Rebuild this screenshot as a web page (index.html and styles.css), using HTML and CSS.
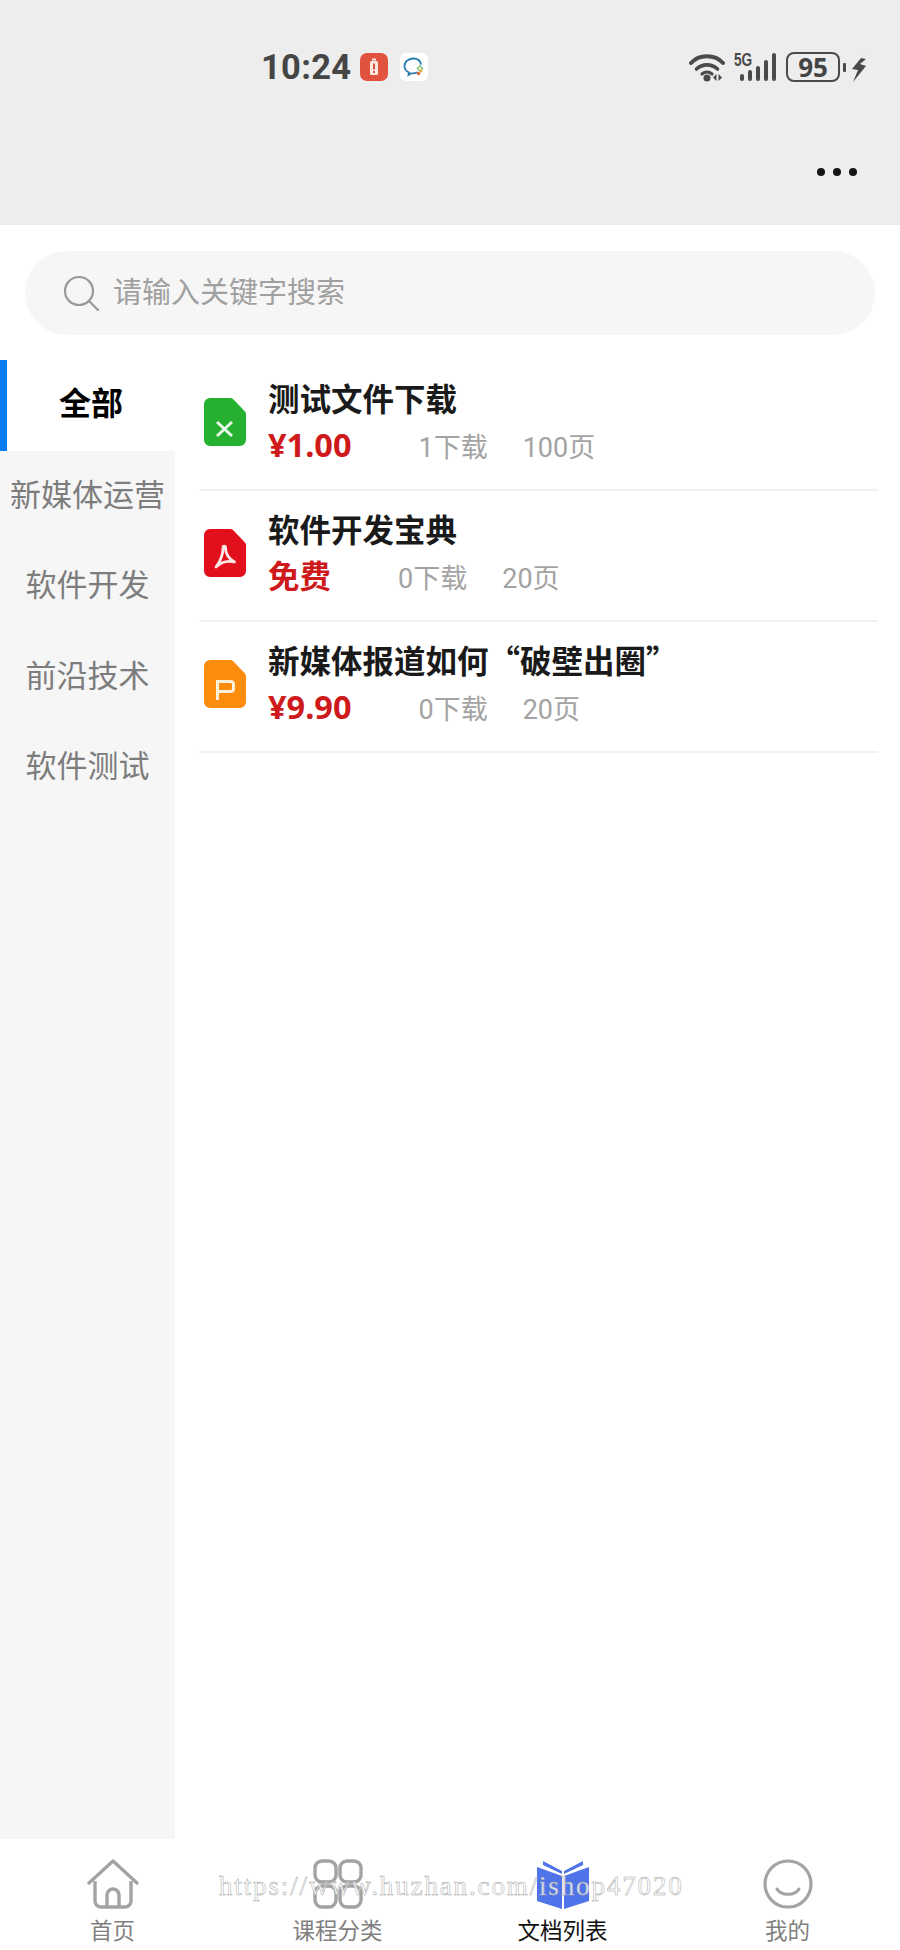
FILE: index.html
```html
<!DOCTYPE html>
<html lang="zh-CN">
<head>
  <meta charset="UTF-8">
  <title>文档列表</title>
  <link rel="stylesheet" href="styles.css">
</head>
<body>

  <div class="page">
    <header class="top">
      <div class="status">
        <span class="time">10:24</span>
        <svg class="badge-red" viewBox="0 0 28 28">
          <rect width="28" height="28" rx="7" fill="#e2533f"/>
          <rect x="10" y="8" width="8" height="14" rx="1.500" fill="#fbe9e4"/>
          <rect x="12" y="5.500" width="4" height="2" fill="#fbe9e4"/>
          <rect x="13" y="10.500" width="2" height="6" fill="#e2533f"/>
          <rect x="13" y="18" width="2" height="2" fill="#e2533f"/>
        </svg>
        <svg class="badge-chat" viewBox="0 0 28 28">
          <rect width="28" height="28" rx="6" fill="#fff"/>
          <path d="M21 11c-1-3.500-4-5.500-7.500-5.500C9 5.500 4.500 8.500 4.500 13c0 3 1.800 5.300 4.500 6.500l-.5 2.500 3-1.700c2 .3 4 0 5.500-.8" fill="none" stroke="#2a7fb0" stroke-width="1.800" stroke-linecap="round"/>
          <path d="M20 12l3.500 3.500-3.500 3.500-3.500-3.500z" fill="#6cb85a"/>
          <circle cx="20" cy="15.500" r="1.500" fill="#fff"/>
          <circle cx="18.500" cy="20.500" r="1.800" fill="#e26a3f"/>
          <circle cx="21" cy="18" r="1.500" fill="#e8b03a"/>
        </svg>
        <div class="status-right">
          <svg class="wifi" viewBox="0 0 36 30">
            <path d="M2 11C10 2 26 2 34 11" fill="none" stroke="#4a4a4a" stroke-width="4" stroke-linecap="round"/>
            <path d="M7.500 17c6-5.500 15-5.500 21 0" fill="none" stroke="#4a4a4a" stroke-width="3.600" stroke-linecap="round"/>
            <path d="M13 22c3-2.500 7-2.500 10 0" fill="none" stroke="#4a4a4a" stroke-width="3.200" stroke-linecap="round"/>
            <circle cx="18" cy="26" r="3.500" fill="#4a4a4a"/>
            <path d="M27.500 22v7L24 25.500zM29.500 22v7l3.500-3.500z" fill="#4a4a4a"/>
          </svg>
          <div class="signal">
            <span class="five-g">5G</span>
            <i class="bar b1"></i><i class="bar b2"></i><i class="bar b3"></i><i class="bar b4"></i><i class="bar b5"></i>
          </div>
          <div class="battery"><span>95</span></div>
          <i class="battery-tip"></i>
          <svg class="bolt" viewBox="0 0 14 30">
            <path d="M14 0 0 17l6 1-5 12 13-16-6-2 6-5-5-1z" fill="#4a4a4a"/>
          </svg>
        </div>
      </div>
      <div class="more"><i></i><i></i><i></i></div>
    </header>

    <div class="search-wrap">
      <div class="search">
        <svg class="search-icon" viewBox="0 0 36 36">
          <circle cx="16" cy="16" r="14" fill="none" stroke="#999" stroke-width="2.200"/>
          <path d="M26 26l9 9" fill="none" stroke="#999" stroke-width="2.200" stroke-linecap="round"/>
        </svg>
        <span class="search-text">请输入关键字搜索</span>
      </div>
    </div>

    <main class="main">
      <nav class="side">
        <a class="side-item active">全部</a>
        <a class="side-item">新媒体运营</a>
        <a class="side-item">软件开发</a>
        <a class="side-item">前沿技术</a>
        <a class="side-item">软件测试</a>
      </nav>

      <section class="docs">
        <div class="doc">
          <svg class="file-icon" viewBox="0 0 42 48">
            <path d="M6 0h20c1.500 0 2.500.5 3.500 1.500L40.500 13c1 1 1.500 2 1.500 3.500V42a6 6 0 0 1-6 6H6a6 6 0 0 1-6-6V6a6 6 0 0 1 6-6z" fill="#25b030"/>
            <path d="M13 24l15 14M28 24L13 38" fill="none" stroke="#e8f7e8" stroke-width="3"/>
          </svg>
          <div class="doc-body">
            <div class="doc-title">测试文件下载</div>
            <div class="doc-meta">
              <span class="price">¥1.00</span>
              <span class="stat">1下载</span>
              <span class="stat">100页</span>
            </div>
          </div>
        </div>

        <div class="doc">
          <svg class="file-icon" viewBox="0 0 42 48">
            <path d="M6 0h20c1.500 0 2.500.5 3.500 1.500L40.500 13c1 1 1.500 2 1.500 3.500V42a6 6 0 0 1-6 6H6a6 6 0 0 1-6-6V6a6 6 0 0 1 6-6z" fill="#e20f1c"/>
            <path d="M19 19c0-2.500 2.500-2.500 2.500 0 0 5 3 11 9 14-6-1.500-13-.5-18.500 5 3-4 7-12 7-19z" fill="none" stroke="#fde8e8" stroke-width="2.800" stroke-linejoin="round"/>
          </svg>
          <div class="doc-body">
            <div class="doc-title">软件开发宝典</div>
            <div class="doc-meta">
              <span class="price free">免费</span>
              <span class="stat">0下载</span>
              <span class="stat">20页</span>
            </div>
          </div>
        </div>

        <div class="doc">
          <svg class="file-icon" viewBox="0 0 42 48">
            <path d="M6 0h20c1.500 0 2.500.5 3.500 1.500L40.500 13c1 1 1.500 2 1.500 3.500V42a6 6 0 0 1-6 6H6a6 6 0 0 1-6-6V6a6 6 0 0 1 6-6z" fill="#fb8c0e"/>
            <path d="M13.500 40V21.500h13c2 0 3 1 3 3v4c0 2-1 3-3 3h-13" fill="none" stroke="#fdf0dc" stroke-width="3"/>
          </svg>
          <div class="doc-body">
            <div class="doc-title">新媒体报道如何“破壁出圈”</div>
            <div class="doc-meta">
              <span class="price">¥9.90</span>
              <span class="stat">0下载</span>
              <span class="stat">20页</span>
            </div>
          </div>
        </div>
      </section>
    </main>

    <footer class="tabs">
      <a class="tab">
        <svg class="tab-icon" viewBox="0 0 52 50">
          <path d="M2 24 26 2l24 22" fill="none" stroke="#a3a3a3" stroke-width="3.400" stroke-linecap="round" stroke-linejoin="round"/>
          <path d="M8 22v20a6 6 0 0 0 6 6h24a6 6 0 0 0 6-6V22" fill="none" stroke="#a3a3a3" stroke-width="3.400"/>
          <path d="M20 48V36a6 6 0 0 1 12 0v12" fill="none" stroke="#a3a3a3" stroke-width="3.400"/>
        </svg>
        <span>首页</span>
      </a>
      <a class="tab">
        <svg class="tab-icon" viewBox="0 0 52 50">
          <rect x="3" y="2" width="21" height="21" rx="7" fill="none" stroke="#a3a3a3" stroke-width="3.400"/>
          <rect x="28" y="2" width="21" height="21" rx="7" fill="none" stroke="#a3a3a3" stroke-width="3.400"/>
          <rect x="3" y="27" width="21" height="21" rx="7" fill="none" stroke="#a3a3a3" stroke-width="3.400"/>
          <rect x="28" y="27" width="21" height="21" rx="7" fill="none" stroke="#a3a3a3" stroke-width="3.400"/>
        </svg>
        <span>课程分类</span>
      </a>
      <a class="tab current">
        <svg class="tab-icon" viewBox="0 0 52 50">
          <path d="M0 8l25 9v33L0 42zM52 8l-25 9v33l25-8z" fill="#4f73e8"/>
          <path d="M6 2l19 10v3L6 6zM46 2 27 12v3L46 6z" fill="#4f73e8"/>
        </svg>
        <span>文档列表</span>
      </a>
      <a class="tab">
        <svg class="tab-icon" viewBox="0 0 52 50">
          <circle cx="26" cy="25" r="23" fill="none" stroke="#a3a3a3" stroke-width="3.200"/>
          <path d="M15 30c4 7 18 7 22 0" fill="none" stroke="#a3a3a3" stroke-width="3" stroke-linecap="round"/>
        </svg>
        <span>我的</span>
      </a>
      <div class="watermark">https://www.huzhan.com/ishop47020</div>
    </footer>
  </div>

</body>
</html>
```

FILE: styles.css
```css
* {
  box-sizing: border-box;
}

body {
  margin: 0;
  background: #fff;
  font-family: "Noto Sans CJK SC", "Noto Sans", sans-serif;
}

.page {
  width: 900px;
  height: 1950px;
  display: flex;
  flex-direction: column;
  overflow: hidden;
}

/* top grey area */
.top {
  height: 225px;
  background: #ededed;
  padding-top: 50px;
}

.status {
  height: 34px;
  display: flex;
  align-items: center;
  padding: 0 34px 0 261px;
}

.time {
  font-family: Roboto, sans-serif;
  font-size: 34.500px;
  font-weight: 700;
  color: #454545;
  letter-spacing: 0.3px;
}

.badge-red {
  width: 28px;
  height: 28px;
  margin-left: 9px;
}

.badge-chat {
  width: 28px;
  height: 28px;
  margin-left: 12px;
}

.status-right {
  margin-left: auto;
  display: flex;
  align-items: center;
}

.wifi {
  width: 36px;
  height: 30px;
}

.signal {
  position: relative;
  width: 42px;
  height: 30px;
  margin-left: 9px;
  padding-bottom: 1px;
  display: flex;
  align-items: flex-end;
  justify-content: flex-end;
  gap: 4px;
}

.five-g {
  position: absolute;
  left: 0;
  top: -2px;
  font-family: "Liberation Sans", sans-serif;
  font-size: 19px;
  line-height: 20px;
  font-weight: 700;
  color: #4a4a4a;
  transform: scaleX(0.72);
  transform-origin: left top;
}

.bar {
  width: 4px;
  background: #4a4a4a;
  border-radius: 2px;
}

.b1 { height: 7px; }
.b2 { height: 11px; }
.b3 { height: 15px; }
.b4 { height: 21px; }
.b5 { height: 28px; }

.battery {
  width: 54px;
  height: 30px;
  margin-left: 10px;
  border: 2px solid #4a4a4a;
  border-radius: 8px;
  display: flex;
  align-items: center;
  justify-content: center;
}

.battery span {
  font-family: "Open Sans", sans-serif;
  font-size: 26px;
  font-weight: 700;
  line-height: 1;
  color: #444;
}

.battery-tip {
  width: 3px;
  height: 9px;
  margin-left: 3px;
  background: #4a4a4a;
  border-radius: 1px;
}

.bolt {
  width: 14px;
  height: 30px;
  margin-left: 6px;
}

.more {
  margin: 84px 43px 0 0;
  display: flex;
  justify-content: flex-end;
  gap: 8px;
}

.more i {
  width: 8px;
  height: 8px;
  background: #151515;
  border-radius: 50%;
}

/* search */
.search-wrap {
  padding: 26px 25px 25px;
}

.search {
  height: 84px;
  padding-left: 38px;
  background: #f6f6f6;
  border-radius: 42px;
  display: flex;
  align-items: center;
  font-size: 29px;
  color: #a0a0a0;
}

.search-icon {
  width: 36px;
  height: 36px;
  margin-right: 14px;
}

.search-text {
  margin-bottom: 7px;
}

/* main part */
.main {
  flex: 1;
  display: flex;
  min-height: 0;
}

.side {
  width: 175px;
  background: #f6f6f6;
}

.side-item {
  display: block;
  height: 90.400px;
  line-height: 83px;
  text-align: center;
  font-size: 31px;
  color: #7d7d7d;
  white-space: nowrap;
}

.side-item.active {
  height: 91px;
  background: #fff;
  color: #000;
  font-size: 32px;
  font-weight: 700;
  border-left: 7px solid #0b7cf0;
}

.docs {
  flex: 1;
  padding: 0 22px 0 24px;
}

.doc {
  height: 131px;
  padding-left: 5px;
  border-bottom: 2px solid #f1f1f1;
  display: flex;
  align-items: center;
}

.file-icon {
  width: 42px;
  height: 48px;
  margin: 0 22px 5px 0;
  flex-shrink: 0;
}

.doc-body {
  padding-bottom: 4px;
}

.doc-title {
  font-size: 31.500px;
  font-weight: 700;
  line-height: 40px;
  color: #1a1a1a;
}

.doc-meta {
  display: flex;
  align-items: baseline;
  margin-top: 8px;
  line-height: 40px;
}

.price {
  font-family: "Noto Sans", "Noto Sans CJK SC", sans-serif;
  font-size: 32.500px;
  font-weight: 700;
  color: #cf1a1c;
  margin-right: 67px;
}

.price.free {
  font-size: 31.500px;
}

.stat {
  font-family: Roboto, "Noto Sans CJK SC", sans-serif;
  font-size: 27px;
  color: #a3a3a3;
  margin-right: 35px;
}

/* bottom tabs */
.tabs {
  position: relative;
  height: 111px;
  background: #fff;
  display: flex;
}

.tab {
  flex: 1;
  padding-top: 20px;
  display: flex;
  flex-direction: column;
  align-items: center;
  font-size: 22.500px;
  line-height: 30px;
  color: #7f7f7f;
}

.tab.current {
  color: #111;
}

.tab-icon {
  width: 52px;
  height: 50px;
  margin-bottom: 5px;
}

.watermark {
  position: absolute;
  left: 219px;
  top: 31px;
  font-family: "Liberation Serif", serif;
  font-size: 27px;
  letter-spacing: 1.860px;
  line-height: 32px;
  color: rgba(255, 255, 255, 0.8);
  -webkit-text-stroke: 0.5px #a6a6a6;
  white-space: nowrap;
}
```
